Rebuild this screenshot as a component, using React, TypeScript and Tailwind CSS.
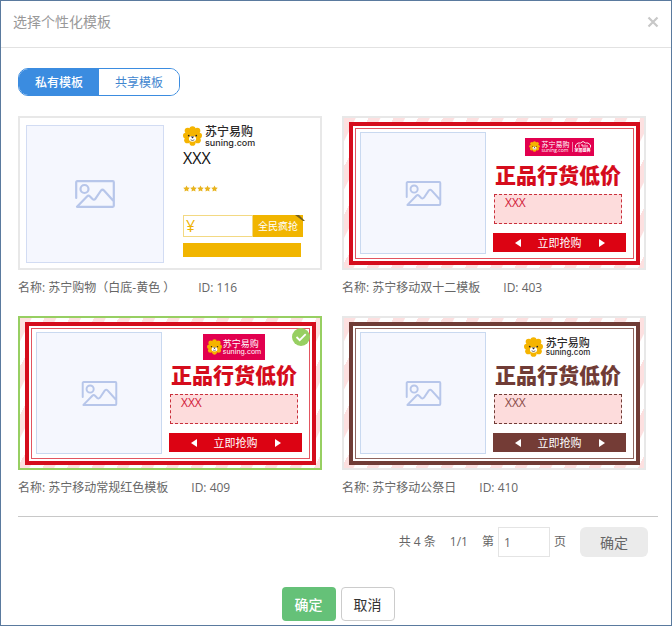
import { useState } from "react";

type Theme = {
  frame: string;
  line: string;
  title: string;
  dash: string;
  bar: string;
};

const RED: Theme = {
  frame: "border-[#d50c1c]",
  line: "border-[#e25560]",
  title: "text-[#d50c1c]",
  dash: "border-[#c9303c] text-[#d2203a]",
  bar: "bg-[#dc0313]",
};

const BROWN: Theme = {
  frame: "border-[#703c36]",
  line: "border-[#8f655f]",
  title: "text-[#703c36]",
  dash: "border-[#703c36] text-[#8a4a48]",
  bar: "bg-[#743c36]",
};

function Lion({ className }: { className: string }) {
  return (
    <svg viewBox="0 0 40 42" className={className} aria-hidden="true">
      <g fill="#f5b400">
        <circle cx="20" cy="7" r="6.5" />
        <circle cx="30" cy="10" r="6.5" />
        <circle cx="34" cy="20" r="6" />
        <circle cx="31" cy="30" r="6.5" />
        <circle cx="20" cy="35" r="6.5" />
        <circle cx="9" cy="30" r="6.5" />
        <circle cx="6" cy="20" r="6" />
        <circle cx="10" cy="10" r="6.5" />
        <circle cx="20" cy="21" r="13" />
      </g>
      <ellipse cx="20" cy="27" rx="7.5" ry="6" fill="#fff" />
      <circle cx="12" cy="20" r="1.8" fill="#2b2020" />
      <circle cx="28" cy="20" r="1.8" fill="#2b2020" />
      <path d="M16.500 22h7L20 26.500z" fill="#2b2020" />
      <path d="M16 29q4 3 8 0" fill="none" stroke="#2b2020" strokeWidth="1.4" />
    </svg>
  );
}

function Picture({ className }: { className: string }) {
  return (
    <svg
      viewBox="0 0 40 28"
      className={className}
      fill="none"
      stroke="#b7c6ea"
      strokeWidth="2.2"
      strokeLinecap="round"
      strokeLinejoin="round"
      aria-hidden="true"
    >
      <path d="M1.200 18V2.200a1 1 0 0 1 1-1H37.800a1 1 0 0 1 1 1V25.800a1 1 0 0 1-1 1H2L12 16.500q1.500-1.500 3 0L17.500 19q1.500 1.300 3-.3L26 10.500q1.500-1.500 3 0L38.500 21" />
      <circle cx="9.500" cy="9" r="4" />
    </svg>
  );
}

function YellowTemplate() {
  return (
    <span className="flex h-[150px] items-start bg-white pl-[6px]">
      <span className="mt-[7px] flex h-[138px] w-[138px] shrink-0 items-center justify-center border border-[#d2dcf3] bg-[#f5f7fe]">
        <Picture className="h-7 w-10" />
      </span>
      <span className="ml-[19px] flex flex-col pt-2">
        <span className="flex h-5 items-center gap-[3px]">
          <Lion className="h-5 w-[19px]" />
          <span className="flex flex-col font-medium text-[#2b2828]">
            <span className="text-[12px] leading-[12px]">苏宁易购</span>
            <span className="font-[Inter,sans-serif] text-[9px] leading-[9px] font-medium">suning.com</span>
          </span>
        </span>
        <span className="mt-px text-[16px] leading-[22px] text-[#111]">XXX</span>
        <span className="mt-[15px] flex h-2 items-center">
          {[0, 1, 2, 3, 4].map((n) => (
            <svg key={n} viewBox="0 0 14 14" className="h-[7px] w-[7px]" fill="#e8b31c" aria-hidden="true">
              <path d="M7 1l2 4 4.500.6-3.300 3.200.8 4.400L7 11l-4 2.200.8-4.400L.5 5.600 5 5z" />
            </svg>
          ))}
        </span>
        <span className="relative mt-[23px] flex h-[22px] w-[120px]">
          <span className="flex flex-1 items-center border border-[#f3d983] pl-[2px] text-[16px] leading-5 text-[#efb300]">
            ¥
          </span>
          <span className="flex w-[50px] items-center justify-center bg-[#f1b500] text-[10px] leading-5 text-white">
            全民疯抢
          </span>
          <svg viewBox="0 0 10 8" className="absolute -top-px -right-0.5 h-2 w-2.5" aria-hidden="true">
            <path d="M0 1h4L10 7H8z" fill="#75601f" />
          </svg>
        </span>
        <span className="mt-[6px] h-[14px] w-[118px] bg-[#f1b500]" />
      </span>
    </span>
  );
}

function BannerTemplate({ theme, logo }: { theme: Theme; logo: "double" | "red" | "plain" }) {
  return (
    <span className="flex h-[150px] bg-[repeating-linear-gradient(117deg,#fde0e0_0_10px,#fff_11px_22px)] pt-1 pr-1 pb-[3px] pl-[5px]">
      <span className={`flex flex-1 border-4 bg-white p-0.5 ${theme.frame}`}>
        <span className={`flex flex-1 border pl-1 ${theme.line}`}>
          <span className="mt-[3px] flex h-[122px] w-[126px] shrink-0 items-center justify-center border border-[#c9d9f0] bg-[#f5f7fe]">
            <Picture className="h-[25px] w-[37px]" />
          </span>
          <span className="ml-[7px] flex w-[133px] flex-col">
            <span className="flex h-[35px] items-center justify-center">
              {logo === "double" && (
                <span className="flex h-[18px] w-[69px] items-center justify-center gap-0.5 bg-[#e2004f] text-white">
                  <Lion className="h-[11px] w-[11px]" />
                  <span className="flex flex-col">
                    <span className="text-[7px] leading-[7px]">苏宁易购</span>
                    <span className="text-[5px] leading-[5px]">suning.com</span>
                  </span>
                  <span className="h-[10px] w-px bg-[#f080a8]" />
                  <span className="flex flex-col items-center">
                    <svg viewBox="0 0 32 14" className="h-[7px] w-4" fill="none" stroke="#fff" strokeWidth="1.800" aria-hidden="true">
                      <path d="M1 13V8L6 4h5l5-3 5 3h5l5 4v5M8 7v6M12 8h4v5M20 7v6M24 8v5" />
                    </svg>
                    <span className="text-[4px] leading-[5px] font-bold">家居盛典</span>
                  </span>
                </span>
              )}
              {logo === "red" && (
                <span className="mr-[3px] flex h-[26px] w-[62px] items-center justify-center gap-px bg-[#e2004f] text-white">
                  <Lion className="h-4 w-[15px]" />
                  <span className="flex flex-col">
                    <span className="text-[9px] leading-[9px]">苏宁易购</span>
                    <span className="font-[Inter,sans-serif] text-[7px] leading-[7px]">suning.com</span>
                  </span>
                </span>
              )}
              {logo === "plain" && (
                <span className="mr-[5px] flex items-center gap-[3px]">
                  <Lion className="h-5 w-[19px]" />
                  <span className="flex flex-col font-medium text-[#2b2828]">
                    <span className="text-[11px] leading-[11px]">苏宁易购</span>
                    <span className="font-[Inter,sans-serif] text-[8px] leading-[9px] font-medium">suning.com</span>
                  </span>
                </span>
              )}
            </span>
            <span className={`pl-0.5 text-[21px] leading-[23px] font-black whitespace-nowrap ${theme.title}`}>
              正品行货低价
            </span>
            <span
              className={`mt-[7px] ml-px h-[30px] w-[128px] border border-dashed bg-[#fddcdc] pl-[10px] text-[12px] leading-4 ${theme.dash}`}
            >
              XXX
            </span>
            <span
              className={`mt-[9px] flex h-[19px] items-center justify-center gap-[17px] text-[11px] leading-4 text-white ${theme.bar}`}
            >
              <svg viewBox="0 0 6 8" className="h-2 w-1.5" fill="#fff" aria-hidden="true">
                <path d="M6 0v8L0 4z" />
              </svg>
              立即抢购
              <svg viewBox="0 0 6 8" className="h-2 w-1.5" fill="#fff" aria-hidden="true">
                <path d="M0 0v8L6 4z" />
              </svg>
            </span>
          </span>
        </span>
      </span>
    </span>
  );
}

const TEMPLATES = [
  { id: 116, name: "苏宁购物（白底-黄色 ）", art: <YellowTemplate /> },
  { id: 403, name: "苏宁移动双十二模板", art: <BannerTemplate theme={RED} logo="double" /> },
  { id: 409, name: "苏宁移动常规红色模板", art: <BannerTemplate theme={RED} logo="red" /> },
  { id: 410, name: "苏宁移动公祭日", art: <BannerTemplate theme={BROWN} logo="plain" /> },
];

export default function App() {
  const [selected, setSelected] = useState(409);
  const [page, setPage] = useState("1");

  return (
    <div
      role="dialog"
      aria-labelledby="dialog-title"
      className="border border-[#5a7a9e] bg-white font-['Open_Sans','Noto_Sans_CJK_SC',sans-serif] text-[12px] text-[#666]"
    >
      <header className="flex h-[47px] items-center justify-between border-b border-[#e2e2e2] px-3 pb-1">
        <h1 id="dialog-title" className="text-[14px] leading-5 text-[#999]">
          选择个性化模板
        </h1>
        <button type="button" aria-label="关闭" className="flex h-5 items-center">
          <svg viewBox="0 0 12 12" className="h-3 w-3" stroke="#c8c8c8" strokeWidth="2.2" aria-hidden="true">
            <path d="M1.500 1.500l9 9M10.500 1.500l-9 9" />
          </svg>
        </button>
      </header>

      <main className="pt-5 pr-[13px] pl-[17px]">
        <div role="tablist" className="flex h-7 w-[162px] overflow-hidden rounded-[10px] border border-[#3b8ce0]">
          <button type="button" role="tab" aria-selected="true" className="flex-1 bg-[#3b8ce0] pt-0.5 font-medium text-white">
            私有模板
          </button>
          <button type="button" role="tab" aria-selected="false" className="flex-1 bg-white pt-0.5 text-[#3f86cf]">
            共享模板
          </button>
        </div>

        <ul className="mt-5 grid grid-cols-2 gap-x-5 gap-y-[10px] pr-3">
          {TEMPLATES.map((t) => {
            const active = t.id === selected;
            return (
              <li key={t.id}>
                <button
                  type="button"
                  aria-pressed={active}
                  aria-label={t.name}
                  onClick={() => setSelected(t.id)}
                  className={`relative block w-full border-2 text-left ${active ? "border-[#97cf62]" : "border-[#e8e8e8]"}`}
                >
                  {t.art}
                  {active && (
                    <svg viewBox="0 0 18 18" className="absolute top-[10px] right-[10px] h-[18px] w-[18px]" aria-hidden="true">
                      <circle cx="9" cy="9" r="9" fill="#97cf62" />
                      <path d="M4.500 9l3.200 3.200 6-6" fill="none" stroke="#fff" strokeWidth="1.800" />
                    </svg>
                  )}
                </button>
                <p className="flex h-9 items-center gap-[23px] whitespace-nowrap">
                  <span>名称: {t.name}</span>
                  <span>ID: {t.id}</span>
                </p>
              </li>
            );
          })}
        </ul>

        <div className="mt-[10px] flex items-center justify-end border-t border-[#c8c8c8] pt-[10px] pr-[10px]">
          <span>共 4 条</span>
          <span className="ml-[14px]">1/1</span>
          <label htmlFor="page" className="ml-[14px]">
            第
          </label>
          <input
            id="page"
            value={page}
            onChange={(e) => setPage(e.target.value)}
            className="mx-1 h-[30px] w-[52px] border border-[#e4e4e4] px-[5px] text-[12px]"
          />
          <span>页</span>
          <button type="button" className="ml-[14px] h-[30px] w-[68px] rounded-md bg-[#ebebeb] text-[14px]">
            确定
          </button>
        </div>
      </main>

      <footer className="flex justify-center gap-[5px] pt-[30px] pb-1 pl-1">
        <button type="button" className="h-[34px] w-[54px] rounded-sm bg-[#65c178] text-[14px] font-medium text-white">
          确定
        </button>
        <button
          type="button"
          className="h-[34px] w-[54px] rounded-sm border border-[#ccc] bg-white text-[14px] text-[#333]"
        >
          取消
        </button>
      </footer>
    </div>
  );
}
